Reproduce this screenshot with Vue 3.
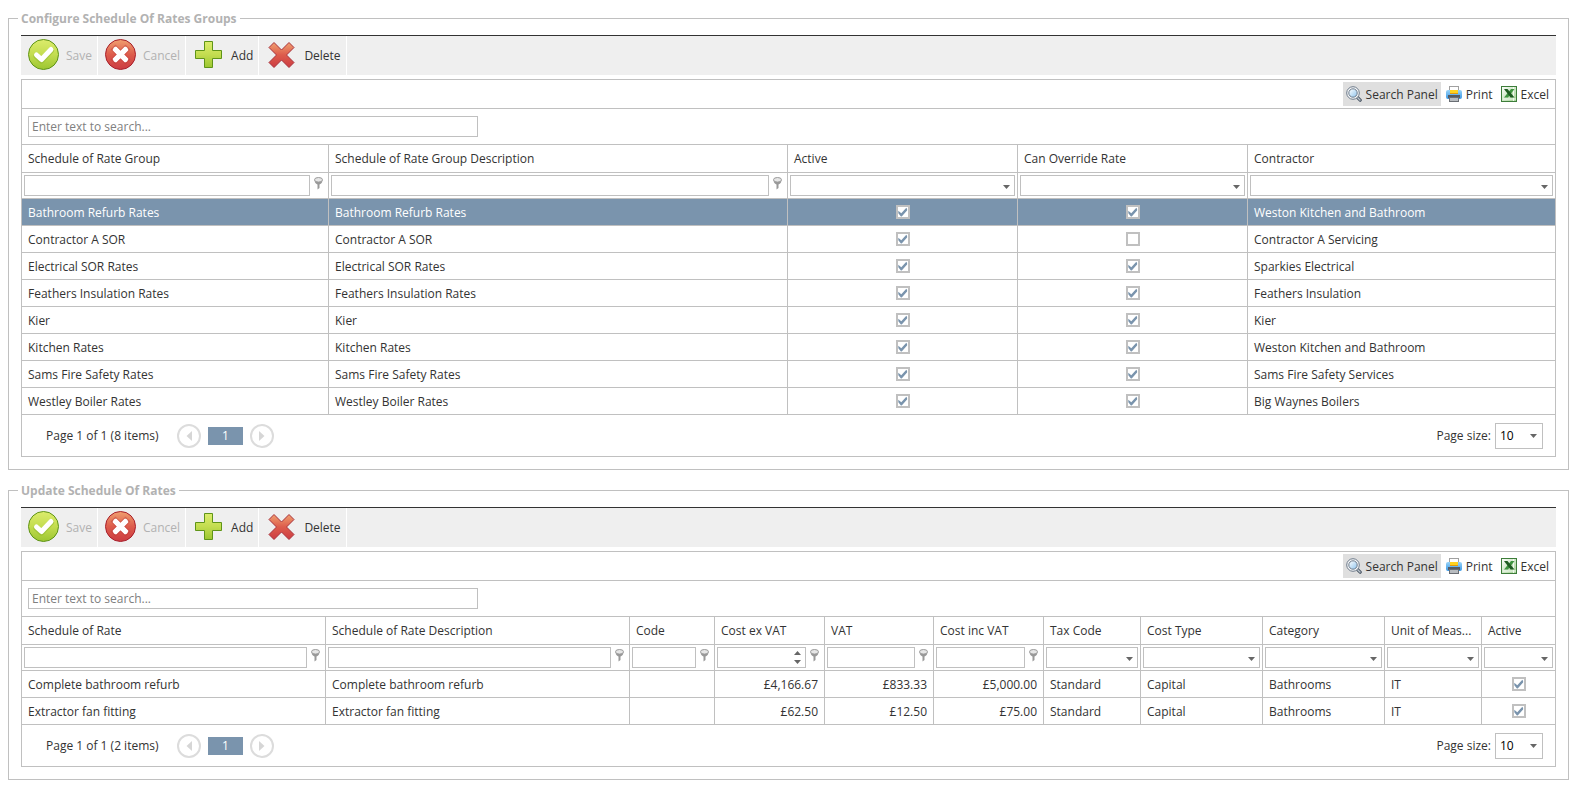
<script setup>
import { ref } from 'vue'

const tools = [
  { id: 'save', label: 'Save', disabled: true },
  { id: 'cancel', label: 'Cancel', disabled: true },
  { id: 'add', label: 'Add', disabled: false },
  { id: 'delete', label: 'Delete', disabled: false },
]

const groupColumns = [
  { label: 'Schedule of Rate Group', width: 307, filter: 'text' },
  { label: 'Schedule of Rate Group Description', width: 459, filter: 'text' },
  { label: 'Active', width: 230, filter: 'combo', type: 'check' },
  { label: 'Can Override Rate', width: 230, filter: 'combo', type: 'check' },
  { label: 'Contractor', width: 307, filter: 'combo' },
]

const rateColumns = [
  { label: 'Schedule of Rate', width: 304, filter: 'text' },
  { label: 'Schedule of Rate Description', width: 304, filter: 'text' },
  { label: 'Code', width: 85, filter: 'text' },
  { label: 'Cost ex VAT', width: 110, filter: 'spin', type: 'money' },
  { label: 'VAT', width: 109, filter: 'text', type: 'money' },
  { label: 'Cost inc VAT', width: 110, filter: 'text', type: 'money' },
  { label: 'Tax Code', width: 97, filter: 'combo' },
  { label: 'Cost Type', width: 122, filter: 'combo' },
  { label: 'Category', width: 122, filter: 'combo' },
  { label: 'Unit of Meas...', width: 97, filter: 'combo' },
  { label: 'Active', width: 73, filter: 'combo', type: 'check' },
]

const panels = ref([
  {
    id: 'groups',
    title: 'Configure Schedule Of Rates Groups',
    columns: groupColumns,
    selected: 0,
    summary: 'Page 1 of 1 (8 items)',
    rows: [
      ['Bathroom Refurb Rates', 'Bathroom Refurb Rates', true, true, 'Weston Kitchen and Bathroom'],
      ['Contractor A SOR', 'Contractor A SOR', true, false, 'Contractor A Servicing'],
      ['Electrical SOR Rates', 'Electrical SOR Rates', true, true, 'Sparkies Electrical'],
      ['Feathers Insulation Rates', 'Feathers Insulation Rates', true, true, 'Feathers Insulation'],
      ['Kier', 'Kier', true, true, 'Kier'],
      ['Kitchen Rates', 'Kitchen Rates', true, true, 'Weston Kitchen and Bathroom'],
      ['Sams Fire Safety Rates', 'Sams Fire Safety Rates', true, true, 'Sams Fire Safety Services'],
      ['Westley Boiler Rates', 'Westley Boiler Rates', true, true, 'Big Waynes Boilers'],
    ],
  },
  {
    id: 'rates',
    title: 'Update Schedule Of Rates',
    columns: rateColumns,
    selected: -1,
    summary: 'Page 1 of 1 (2 items)',
    rows: [
      ['Complete bathroom refurb', 'Complete bathroom refurb', '', '£4,166.67', '£833.33', '£5,000.00', 'Standard', 'Capital', 'Bathrooms', 'IT', true],
      ['Extractor fan fitting', 'Extractor fan fitting', '', '£62.50', '£12.50', '£75.00', 'Standard', 'Capital', 'Bathrooms', 'IT', true],
    ],
  },
])

const share = (col, columns) => (col.width / columns.reduce((sum, c) => sum + c.width, 0)) * 100 + '%'
</script>

<template>
  <main class="page">
    <svg class="defs" width="0" height="0" aria-hidden="true">
      <defs>
        <linearGradient id="green" x1="0" y1="0" x2="0" y2="1">
          <stop offset="0" stop-color="#dcec6c" />
          <stop offset="0.5" stop-color="#c3dd50" />
          <stop offset="1" stop-color="#9cc630" />
        </linearGradient>
        <linearGradient id="red" x1="0" y1="0" x2="0" y2="1">
          <stop offset="0" stop-color="#f0a070" />
          <stop offset="0.5" stop-color="#dd5c4c" />
          <stop offset="1" stop-color="#cc3c42" />
        </linearGradient>
        <linearGradient id="blue" x1="0" y1="0" x2="0" y2="1">
          <stop offset="0" stop-color="#9ad4f8" />
          <stop offset="1" stop-color="#3a98e6" />
        </linearGradient>
        <linearGradient id="lens" x1="0" y1="0" x2="1" y2="1">
          <stop offset="0" stop-color="#ffffff" />
          <stop offset="1" stop-color="#8fc4ee" />
        </linearGradient>
        <linearGradient id="sheet" x1="0" y1="0" x2="1" y2="1">
          <stop offset="0" stop-color="#ffffff" />
          <stop offset="1" stop-color="#9fd08f" />
        </linearGradient>
      </defs>
    </svg>

    <fieldset v-for="panel in panels" :key="panel.id" class="panel">
      <legend>{{ panel.title }}</legend>

      <div class="toolbar">
        <button v-for="tool in tools" :key="tool.id" type="button" class="tool" :disabled="tool.disabled">
          <svg width="32" height="32" viewBox="0 0 32 32" aria-hidden="true">
            <template v-if="tool.id === 'save'">
              <circle cx="15.5" cy="15.5" r="15" fill="url(#green)" stroke="#5f9418" />
              <path d="M8.5 17 L13.5 21.5 L23 11.5" fill="none" stroke="#8cb52c" stroke-width="6" stroke-linecap="round" stroke-linejoin="round" opacity="0.5" />
              <path d="M8.5 16 L13.5 20.5 L23 10.5" fill="none" stroke="#fff" stroke-width="5" stroke-linecap="round" stroke-linejoin="round" />
            </template>
            <template v-else-if="tool.id === 'cancel'">
              <circle cx="15.5" cy="15.5" r="15" fill="url(#red)" stroke="#a8202c" />
              <path d="M10.5 10.5 L20.5 20.5 M20.5 10.5 L10.5 20.5" fill="none" stroke="#b83434" stroke-width="7" stroke-linecap="square" opacity="0.4" />
              <path d="M10.5 10.5 L20.5 20.5 M20.5 10.5 L10.5 20.5" fill="none" stroke="#fff" stroke-width="5" stroke-linecap="round" />
              <path d="M11 11 L20 20 M20 11 L11 20" fill="none" stroke="#fff" stroke-width="5" stroke-linecap="square" />
            </template>
            <path v-else-if="tool.id === 'add'" d="M11.5 2.5 H19.5 V11.5 H28.5 V19.5 H19.5 V28.5 H11.5 V19.5 H2.5 V11.5 H11.5 Z" fill="url(#green)" stroke="#5f9418" stroke-linejoin="round" />
            <path v-else d="M8 3.5 L15.5 11 L23 3.5 L28 8.5 L20.5 16 L28 23.5 L23 28.5 L15.5 21 L8 28.5 L3 23.5 L10.5 16 L3 8.5 Z" fill="url(#red)" stroke="#a8303a" stroke-linejoin="round" />
          </svg>
          <span>{{ tool.label }}</span>
        </button>
      </div>

      <div class="grid">
        <div class="commands">
          <button type="button" class="command pressed">
            <svg width="16" height="16" viewBox="0 0 16 16" aria-hidden="true">
              <path d="M11 11 L14.2 14.2" stroke="#4c5866" stroke-width="3.2" stroke-linecap="round" />
              <path d="M11 11 L14 14" stroke="#b9c2cc" stroke-width="1.4" stroke-linecap="round" />
              <circle cx="7" cy="7" r="6.3" fill="#f4f6f8" stroke="#6e7b8a" />
              <circle cx="7" cy="7" r="4.2" fill="url(#lens)" stroke="#6e7b8a" />
            </svg>
            <span>Search Panel</span>
          </button>
          <button type="button" class="command">
            <svg width="16" height="16" viewBox="0 0 16 16" aria-hidden="true">
              <rect x="3.5" y="0.5" width="9" height="6" fill="#fff" stroke="#a0a0a0" />
              <rect x="0" y="4" width="16" height="9" rx="2" fill="url(#blue)" />
              <rect x="4" y="4" width="8" height="4" fill="#ffd21f" />
              <rect x="4" y="7" width="8" height="1" fill="#e09a10" />
              <rect x="2" y="9" width="12" height="3" fill="#565b62" />
              <rect x="3.5" y="11.5" width="9" height="4" fill="#b8bcc0" stroke="#6a6e74" />
            </svg>
            <span>Print</span>
          </button>
          <button type="button" class="command">
            <svg width="16" height="16" viewBox="0 0 16 16" aria-hidden="true">
              <rect x="0.5" y="0.5" width="15" height="15" fill="url(#sheet)" stroke="#3d7d3a" />
              <path d="M12.5 1 V15 M2 13 H15" stroke="#fff" opacity="0.8" />
              <path d="M10 3 H13.5 L7 11.5 H3 Z" fill="#3f9440" />
              <path d="M3 3 H6.5 L13.5 11.5 H9.5 Z" fill="#1f5c22" />
            </svg>
            <span>Excel</span>
          </button>
        </div>

        <div class="search">
          <input type="text" placeholder="Enter text to search..." :aria-label="'Search ' + panel.title" />
        </div>

        <table>
          <colgroup>
            <col v-for="col in panel.columns" :key="col.label" :style="{ width: share(col, panel.columns) }" />
          </colgroup>
          <thead>
            <tr class="head">
              <th v-for="col in panel.columns" :key="col.label" scope="col">{{ col.label }}</th>
            </tr>
            <tr class="filters">
              <td v-for="col in panel.columns" :key="col.label">
                <div v-if="col.filter === 'combo'" class="filter combo">
                  <select :aria-label="'Filter ' + col.label"><option></option></select>
                  <svg width="7" height="4" viewBox="0 0 7 4" aria-hidden="true"><path d="M0 0 H7 L3.5 4 Z" /></svg>
                </div>
                <div v-else class="filter">
                  <div class="box">
                    <input type="text" :aria-label="'Filter ' + col.label" />
                    <span v-if="col.filter === 'spin'" class="spin">
                      <button type="button" aria-label="Increase"><svg width="7" height="4" viewBox="0 0 7 4"><path d="M0 4 H7 L3.5 0 Z" /></svg></button>
                      <button type="button" aria-label="Decrease"><svg width="7" height="4" viewBox="0 0 7 4"><path d="M0 0 H7 L3.5 4 Z" /></svg></button>
                    </span>
                  </div>
                  <button type="button" class="pin" :aria-label="'Filter options for ' + col.label">
                    <svg width="9" height="13" viewBox="0 0 9 13" aria-hidden="true">
                      <path d="M0.5 3 C0.5 6 2.5 7 3.5 7.5 V12.5 L5.5 11 V7.5 C6.5 7 8.5 6 8.5 3 Z" fill="#999" />
                      <ellipse cx="4.5" cy="2.8" rx="4" ry="2.3" fill="#e6e6e6" stroke="#999" />
                    </svg>
                  </button>
                </div>
              </td>
            </tr>
          </thead>
          <tbody>
            <tr v-for="(row, r) in panel.rows" :key="r" :class="{ selected: r === panel.selected }">
              <td v-for="(cell, c) in row" :key="c" :class="panel.columns[c].type">
                <input v-if="panel.columns[c].type === 'check'" v-model="row[c]" type="checkbox" :aria-label="panel.columns[c].label + ', ' + row[0]" />
                <template v-else>{{ cell }}</template>
              </td>
            </tr>
          </tbody>
        </table>

        <div class="pager">
          <span class="summary">{{ panel.summary }}</span>
          <button type="button" class="step" disabled aria-label="Previous page">
            <svg width="6" height="10" viewBox="0 0 6 10" aria-hidden="true"><path d="M6 0 V10 L0.5 5 Z" /></svg>
          </button>
          <button type="button" class="current" aria-current="page">1</button>
          <button type="button" class="step" disabled aria-label="Next page">
            <svg width="6" height="10" viewBox="0 0 6 10" aria-hidden="true"><path d="M0 0 V10 L5.5 5 Z" /></svg>
          </button>
          <label class="size-label" :for="'size-' + panel.id">Page size:</label>
          <div class="combo size">
            <select :id="'size-' + panel.id"><option>10</option></select>
            <svg width="7" height="4" viewBox="0 0 7 4" aria-hidden="true"><path d="M0 0 H7 L3.5 4 Z" /></svg>
          </div>
        </div>
      </div>
    </fieldset>
  </main>
</template>

<style>
body {
  background: #fff;
}
</style>

<style scoped>
.page {
  box-sizing: border-box;
  display: flex;
  flex-direction: column;
  gap: 12px;
  padding: 10px 7px 10px 8px;
  color: #333;
  font: 12px/16px "Segoe UI", "Open Sans", "Noto Sans", sans-serif;
}
.page * {
  box-sizing: border-box;
}
.defs {
  position: absolute;
}
button,
input,
select {
  margin: 0;
  padding: 0;
  border: 0;
  background: none;
  color: inherit;
  font: inherit;
}
.panel {
  min-width: 0;
  margin: 0;
  padding: 8px 12px 12px;
  border: 1px solid #c0c0c0;
}
.panel legend {
  height: 17px;
  margin-left: -3px;
  padding: 0 3px;
  color: #b2b2b2;
  font-weight: 700;
  line-height: 17px;
}
.toolbar {
  display: flex;
  height: 40px;
  margin-bottom: 4px;
  border-top: 1px solid #333;
  background: #efefef;
}
.tool {
  display: flex;
  align-items: center;
  gap: 6px;
  padding: 0 5px 0 7px;
  border-right: 1px solid #fff;
}
.tool svg {
  margin-bottom: 1px;
}
.tool span {
  padding-top: 1px;
}
.tool:disabled {
  color: #b2b2b2;
}
.grid {
  border: 1px solid #c0c0c0;
}
.commands {
  display: flex;
  align-items: center;
  justify-content: flex-end;
  gap: 2px;
  height: 29px;
  padding-right: 3px;
  border-bottom: 1px solid #c0c0c0;
}
.command {
  display: flex;
  align-items: center;
  gap: 4px;
  height: 24px;
  padding: 0 3px;
}
.command span {
  padding-top: 2px;
}
.command.pressed {
  background: #dfdfdf;
}
.search {
  height: 36px;
  padding: 7px 6px;
  border-bottom: 1px solid #c0c0c0;
}
.search input {
  display: block;
  width: 450px;
  max-width: 100%;
  height: 21px;
  padding: 0 3px;
  border: 1px solid #c0c0c0;
}
.search input::placeholder {
  color: #808080;
}
table {
  width: 100%;
  border-collapse: separate;
  border-spacing: 0;
  table-layout: fixed;
}
th,
td {
  height: 27px;
  padding: 2px 6px 0;
  border-right: 1px solid #c0c0c0;
  border-bottom: 1px solid #c0c0c0;
  overflow: hidden;
  text-align: left;
  text-overflow: ellipsis;
  white-space: nowrap;
}
th:last-child,
td:last-child {
  border-right: 0;
}
th {
  height: 28px;
  padding-top: 0;
  font-weight: 400;
}
.filters td {
  height: 26px;
  padding: 2px;
}
.filter {
  display: flex;
}
.box {
  display: flex;
  flex: 1;
  min-width: 0;
  height: 21px;
  border: 1px solid #c0c0c0;
}
.box input {
  flex: 1;
  min-width: 0;
  width: 0;
}
.pin {
  width: 16px;
  height: 21px;
  padding: 2px 0 6px 4px;
}
.pin svg,
.spin svg {
  display: block;
}
.spin {
  display: flex;
  flex-direction: column;
  justify-content: center;
  gap: 5px;
  width: 11px;
}
.spin button {
  width: 7px;
  height: 4px;
}
.spin path,
.combo path {
  fill: #666;
}
.combo {
  position: relative;
  height: 21px;
  border: 1px solid #c0c0c0;
}
.combo select {
  width: 100%;
  height: 100%;
  appearance: none;
}
.combo svg {
  position: absolute;
  top: 9px;
  right: 4px;
  pointer-events: none;
}
td.money {
  text-align: right;
}
td.check {
  padding-top: 0;
  text-align: center;
}
.selected td {
  background: #7a94ad;
  color: #fff;
}
input[type="checkbox"] {
  display: block;
  width: 14px;
  height: 14px;
  margin: 0 auto;
  border: 2px solid #c0c0c0;
  background: #fff;
  appearance: none;
}
input[type="checkbox"]:checked::before {
  content: "";
  display: block;
  width: 10px;
  height: 10px;
  background: #7a94ad;
  clip-path: polygon(8% 38%, 38% 62%, 88% 8%, 96% 20%, 96% 34%, 42% 94%, 34% 94%, 8% 62%);
}
.pager {
  display: flex;
  align-items: center;
  height: 41px;
  padding: 0 12px 0 24px;
}
.summary {
  width: 131px;
}
.step {
  display: flex;
  align-items: center;
  justify-content: center;
  width: 24px;
  height: 24px;
  border: 2px solid #dcdcdc;
  border-radius: 50%;
}
.step path {
  fill: #d6d6d6;
}
.current {
  width: 35px;
  height: 18px;
  margin: 0 7px;
  background: #7a94ad;
  color: #fff;
  text-align: center;
}
.size-label {
  margin-left: auto;
}
.combo.size {
  width: 48px;
  height: 26px;
  margin-left: 4px;
}
.combo.size select {
  padding: 0 4px;
  color: #000;
}
.combo.size svg {
  top: 10px;
  right: 5px;
}
</style>
